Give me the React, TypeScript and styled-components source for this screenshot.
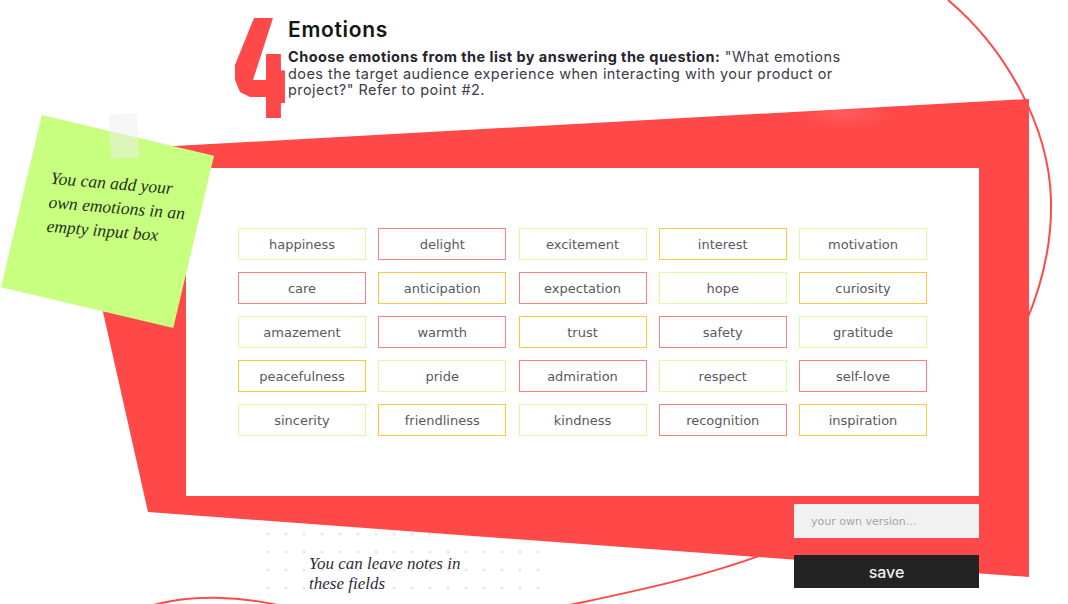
import styled, { createGlobalStyle } from 'styled-components'

type Tone = 'green' | 'red' | 'yellow'

const borderColors: Record<Tone, string> = {
  green: '#d6ffa0',
  red: '#ff7f7f',
  yellow: '#ffc93f',
}

const emotions: [string, Tone][] = [
  ['happiness', 'green'],
  ['delight', 'red'],
  ['excitement', 'green'],
  ['interest', 'yellow'],
  ['motivation', 'green'],
  ['care', 'red'],
  ['anticipation', 'yellow'],
  ['expectation', 'red'],
  ['hope', 'green'],
  ['curiosity', 'yellow'],
  ['amazement', 'green'],
  ['warmth', 'red'],
  ['trust', 'yellow'],
  ['safety', 'red'],
  ['gratitude', 'green'],
  ['peacefulness', 'yellow'],
  ['pride', 'green'],
  ['admiration', 'red'],
  ['respect', 'green'],
  ['self-love', 'red'],
  ['sincerity', 'green'],
  ['friendliness', 'yellow'],
  ['kindness', 'green'],
  ['recognition', 'red'],
  ['inspiration', 'yellow'],
]

const GlobalStyle = createGlobalStyle`
  html, body {
    margin: 0;
    padding: 0;
    background: #fff;
  }
  * {
    box-sizing: border-box;
  }
`

const Page = styled.div`
  position: relative;
  width: 1068px;
  height: 604px;
  overflow: hidden;
  background: #fff;
  font-family: 'DejaVu Sans', sans-serif;
`

const Backdrop = styled.svg`
  position: absolute;
  left: 0;
  top: 0;
`

const Content = styled.div`
  position: relative;
  display: flex;
  flex-direction: column;
`

const Header = styled.header`
  display: flex;
  height: 168px;
  padding: 18px 0 0 229px;
`

// the reference numeral is a cut display face, so the glyph is thickened and clipped to its outline
const BigNumber = styled.div`
  flex: none;
  width: 86px;
  height: 100px;
  margin-right: -27px;
  color: #ff4949;
  font-family: 'Roboto', sans-serif;
  font-weight: 900;
  font-size: 145px;
  line-height: 100px;
  -webkit-text-stroke: 14px #ff4949;
  transform: scaleX(0.68);
  transform-origin: 0 50%;
  clip-path: polygon(
    36.8px 0,
    64.7px 0,
    35.3px 62px,
    54.4px 62px,
    54.4px 36px,
    82.3px 36px,
    82.3px 100px,
    54.4px 100px,
    54.4px 79px,
    30.9px 79px,
    16.2px 74px,
    8.8px 62px,
    8.8px 47px
  );
`

const Intro = styled.div`
  width: 562px;
  font-family: 'Inter', sans-serif;
`

const Title = styled.h1`
  margin: 0 0 7px;
  color: #141414;
  font-size: 21px;
  line-height: 24px;
  font-weight: 600;
  letter-spacing: 0.7px;
`

const Description = styled.p`
  margin: 0;
  color: #3e3a4a;
  font-size: 14.5px;
  line-height: 16.5px;
  letter-spacing: 0.44px;

  strong {
    color: #26232e;
    font-weight: 700;
  }
`

const Panel = styled.main`
  width: 793px;
  height: 328px;
  margin-left: 186px;
  padding: 60px 52px 0;
  background: #fff;
`

const TagGrid = styled.div`
  display: grid;
  grid-template-columns: repeat(5, 128px);
  grid-auto-rows: 32px;
  gap: 12px 12.25px;
`

const Tag = styled.div<{ $tone: Tone }>`
  display: flex;
  align-items: center;
  justify-content: center;
  border: 1px solid ${(p) => borderColors[p.$tone]};
  color: #5a5763;
  font-size: 13px;
  background: #fff;
`

const Footer = styled.footer`
  display: flex;
  justify-content: space-between;
  width: 979px;
  padding: 8px 0 0 309px;
`

const Handwriting = styled.div`
  font-family: 'Liberation Serif', serif;
  font-style: italic;
  color: #2f2d38;
  font-size: 17px;
  line-height: 20px;
`

const NotesText = styled(Handwriting)`
  margin-top: 50px;
`

const Actions = styled.div`
  display: flex;
  flex-direction: column;
  gap: 17px;
  width: 185px;
`

const VersionInput = styled.input`
  height: 34px;
  padding: 0 17px;
  border: 0;
  outline: 0;
  background: #f1f1f1;
  font-family: inherit;
  font-size: 11px;

  &::placeholder {
    color: #a5a5a5;
    opacity: 1;
  }
`

const SaveButton = styled.button`
  height: 33px;
  border: 0;
  background: #232323;
  color: #f0f0f0;
  font-family: 'Inter', sans-serif;
  font-weight: 500;
  font-size: 16px;
`

const StickyNote = styled.div`
  position: absolute;
  left: 19px;
  top: 133px;
  width: 177px;
  height: 177px;
  background: #c8ff80;
  transform: rotate(13.3deg);
`

const StickyText = styled(Handwriting)`
  position: absolute;
  left: 26px;
  top: 36px;
  width: 146px;
  color: #26301a;
  font-size: 17.5px;
  line-height: 24px;
  transform: rotate(-8.5deg);
`

const Tape = styled.div`
  position: absolute;
  left: 110px;
  top: 114px;
  width: 28px;
  height: 44px;
  background: rgba(238, 238, 238, 0.5);
  transform: rotate(-3deg);
`

const App = () => {
  return (
    <Page>
      <GlobalStyle />
      <Backdrop width="1068" height="604" viewBox="0 0 1068 604" fill="none">
        <defs>
          <radialGradient id="glow">
            <stop offset="0" stopColor="#fff" stopOpacity="0.1" />
            <stop offset="1" stopColor="#fff" stopOpacity="0" />
          </radialGradient>
          <pattern id="dots" x="259" y="525" width="18" height="18" patternUnits="userSpaceOnUse">
            <circle cx="9" cy="9" r="1.5" fill="#e6e6e6" />
          </pattern>
        </defs>
        <rect x="259" y="525" width="288" height="72" fill="url(#dots)" />
        <path
          d="M948 0C1005 48 1049 125 1051 200C1052 245 1042 285 1026 322"
          stroke="#ff4949"
          strokeWidth="2"
        />
        <path d="M150 606C190 594 240 596 282 606" stroke="#ff4949" strokeWidth="2" />
        <path d="M565 606C640 590 700 578 770 552" stroke="#ff4949" strokeWidth="2" />
        <polygon points="67,152 1029,99 1029,577 148,512" fill="#ff4949" />
        <ellipse cx="845" cy="114" rx="48" ry="14" fill="url(#glow)" />
      </Backdrop>
      <Content>
        <Header>
          <BigNumber>4</BigNumber>
          <Intro>
            <Title>Emotions</Title>
            <Description>
              <strong>Choose emotions from the list by answering the question:</strong> "What emotions
              does the target audience experience when interacting with your product or project?"
              Refer to point #2.
            </Description>
          </Intro>
        </Header>
        <Panel>
          <TagGrid>
            {emotions.map(([label, tone]) => (
              <Tag key={label} $tone={tone}>
                {label}
              </Tag>
            ))}
          </TagGrid>
        </Panel>
        <Footer>
          <NotesText>
            You can leave notes in
            <br />
            these fields
          </NotesText>
          <Actions>
            <VersionInput placeholder="your own version..." />
            <SaveButton>save</SaveButton>
          </Actions>
        </Footer>
      </Content>
      <StickyNote>
        <StickyText>You can add your own emotions in an empty input box</StickyText>
      </StickyNote>
      <Tape />
    </Page>
  )
}

export default App
